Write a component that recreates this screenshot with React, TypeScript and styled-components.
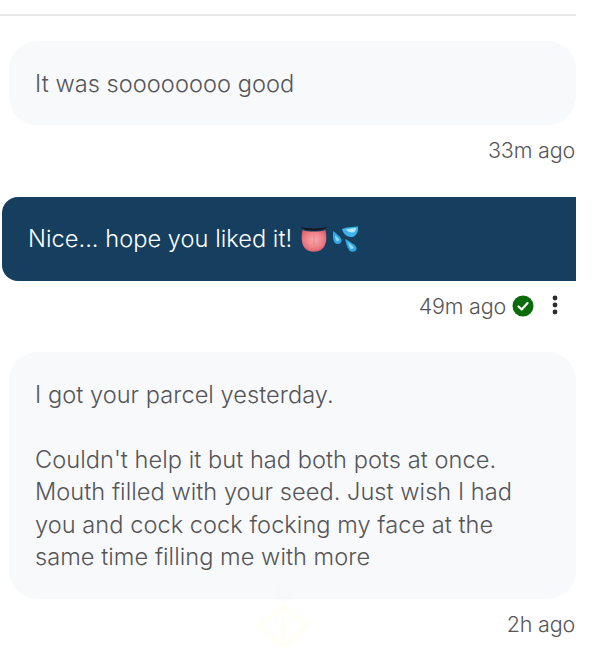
import React from 'react';
import styled, { createGlobalStyle } from 'styled-components';

const GlobalStyle = createGlobalStyle`
  html, body {
    margin: 0;
    padding: 0;
    background: #fff;
  }
  body {
    font-family: Inter, 'Liberation Sans', sans-serif;
  }
`;

const Page = styled.div`
  position: relative;
  width: 600px;
  height: 668px;
  overflow: hidden;
  box-sizing: border-box;
  padding: 14px 24px 0 0;
  background: #fff;
`;

const Divider = styled.div`
  height: 2px;
  background: #e7e7e9;
  margin-bottom: 25px;
`;

const Thread = styled.div`
  display: flex;
  flex-direction: column;
`;

const Bubble = styled.div<{ $mine?: boolean }>`
  box-sizing: border-box;
  margin-left: ${(p) => (p.$mine ? '2px' : '9px')};
  padding: ${(p) => (p.$mine ? '26px 26px' : '26.6px 26px 25.4px')};
  min-height: 84px;
  background: ${(p) => (p.$mine ? '#163e5f' : '#f8f9fb')};
  color: ${(p) => (p.$mine ? '#fff' : '#555558')};
  border-radius: ${(p) => (p.$mine ? '16px 0 0 16px' : '28px')};
  font-size: 23.6px;
  font-weight: 350;
  line-height: 32.4px;
  letter-spacing: 0.04px;
`;

const Paragraph = styled.p`
  margin: 0 0 32.4px;
  &:last-child {
    margin-bottom: 0;
  }
`;

const MessageLine = styled.div`
  display: flex;
  align-items: center;
  height: 32px;
`;

const Meta = styled.div<{ $gap: number }>`
  display: flex;
  align-items: center;
  justify-content: flex-end;
  height: 50px;
  margin-bottom: ${(p) => p.$gap}px;
  padding-right: 1px;
  box-sizing: border-box;
  color: #555558;
  font-size: 21.5px;
  font-weight: 350;
  letter-spacing: -0.2px;
`;

const Tick = styled.svg`
  width: 22px;
  height: 22px;
  margin-left: 6px;
`;

const Dots = styled.svg`
  width: 8px;
  height: 20px;
  margin: 0 16px 2px 17px;
`;

const Tongue = styled.svg`
  width: 28px;
  height: 26px;
  margin-left: 8px;
  flex: none;
`;

const Splash = styled.svg`
  width: 26px;
  height: 26px;
  margin-left: 4px;
  flex: none;
`;

const Ghost = styled.svg`
  position: absolute;
  left: 255px;
  top: 585px;
  width: 56px;
  height: 66px;
  filter: blur(0.8px);
`;

const TongueEmoji = () => (
  <Tongue viewBox="0 0 28 26">
    <defs>
      <radialGradient id="tongue" cx="0.5" cy="0.45" r="0.6">
        <stop offset="0" stopColor="#f6a9ac" />
        <stop offset="0.6" stopColor="#ee8088" />
        <stop offset="1" stopColor="#d9596a" />
      </radialGradient>
    </defs>
    <path d="M0.5 0.5 C5 3 23 3 27.5 0.5 C25 6 3 6 0.5 0.5Z" fill="#14181d" />
    <path d="M2.5 4 C8 6 20 6 25.5 4 C27.5 14 26.5 25.5 14 25.8 C1.5 25.5 0.5 14 2.5 4Z" fill="url(#tongue)" />
    <path d="M14 8 V19" stroke="#de7a84" strokeWidth="0.8" />
  </Tongue>
);

const SplashEmoji = () => (
  <Splash viewBox="0 0 26 26">
    <path d="M10 3 C15 1 21 1 26 0.5 C26.5 6 24 11 19 11 C14 11 11 7 10 3Z" fill="#3fb2ea" />
    <path d="M14 3.5 C18 2.5 21 2.5 24 2 C24 5 22 7 19.5 6.5 C17 6 15 5 14 3.5Z" fill="#b5e8fb" />
    <path d="M1 5 C4 7 9 11 9.5 14 C10 18 5 19 3 17 C0.5 14 1 9 1 5Z" fill="#2ea7e4" />
    <path d="M3 9 C5 11 7 12.5 7.5 14 L5 15.5 C3.5 14 3 11 3 9Z" fill="#8fd8f7" />
    <path d="M13 13 C17 15 24 19 24.5 22 C25 26 19 27 17 24 C15 21 14 17 13 13Z" fill="#2ea7e4" />
    <path d="M16 16 C18 18 21 20 22 22 L19 23.5 C17.5 21.5 16.5 18.5 16 16Z" fill="#8fd8f7" />
  </Splash>
);

const App: React.FC = () => {
  return (
    <Page>
      <GlobalStyle />
      <Divider />
      <Thread>
        <Bubble>It was soooooooo good</Bubble>
        <Meta $gap={22}>33m ago</Meta>

        <Bubble $mine>
          <MessageLine>
            Nice... hope you liked it!
            <TongueEmoji />
            <SplashEmoji />
          </MessageLine>
        </Bubble>
        <Meta $gap={21}>
          49m ago
          <Tick viewBox="0 0 22 22">
            <circle cx="11" cy="11" r="10.5" fill="#0a6b0a" />
            <path d="M6.5 11.5 L9.7 14.5 L15.5 8" fill="none" stroke="#fff" strokeWidth="2.2" strokeLinecap="round" strokeLinejoin="round" />
          </Tick>
          <Dots viewBox="0 0 8 20">
            <circle cx="4" cy="3" r="2.4" fill="#2c2c30" />
            <circle cx="4" cy="10" r="2.4" fill="#2c2c30" />
            <circle cx="4" cy="17" r="2.4" fill="#2c2c30" />
          </Dots>
        </Meta>

        <Bubble>
          <Paragraph>I got your parcel yesterday.</Paragraph>
          <Paragraph>
            Couldn't help it but had both pots at once.
            <br />
            Mouth filled with your seed. Just wish I had
            <br />
            you and cock cock focking my face at the
            <br />
            same time filling me with more
          </Paragraph>
        </Bubble>
        <Meta $gap={0}>2h ago</Meta>
      </Thread>
      <Ghost viewBox="0 0 56 66">
        <path d="M28 22 L52 41 L28 62 L4 41Z" fill="none" stroke="#fffef6" strokeWidth="5" />
        <path d="M28 22 V62" stroke="#fffef6" strokeWidth="4" />
        <circle cx="28" cy="8" r="6" fill="none" stroke="#f7f8f6" strokeWidth="2.5" />
      </Ghost>
    </Page>
  );
};

export default App;
